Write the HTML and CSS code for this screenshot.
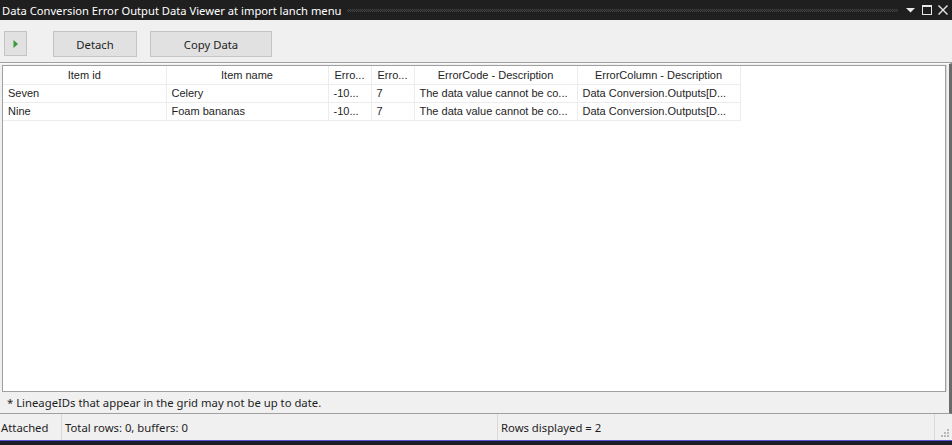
FILE: index.html
```html
<!DOCTYPE html>
<html>
<head>
<meta charset="utf-8">
<link rel="stylesheet" href="styles.css">
</head>
<body>
<div class="window">
  <div class="titlebar">
    <span class="title">Data Conversion Error Output Data Viewer at import lanch menu</span>
    <span class="grip"></span>
    <span class="tbtns">
      <svg class="ic" width="14" height="14" viewBox="0 0 14 14"><path d="M2 5 H11 L6.5 9.5 Z" fill="#e8e8e8"/></svg>
      <svg class="ic" width="14" height="14" viewBox="0 0 14 14"><rect x="2.5" y="2.5" width="9" height="9" fill="none" stroke="#e8e8e8" stroke-width="1"/><rect x="2" y="2" width="10" height="2" fill="#e8e8e8"/></svg>
      <svg class="ic" width="14" height="14" viewBox="0 0 14 14"><path d="M2.5 2.5 L11.5 11.5 M11.5 2.5 L2.5 11.5" stroke="#e8e8e8" stroke-width="1.4"/></svg>
    </span>
  </div>
  <div class="toolbar">
    <button class="btn play"><svg width="8" height="10" viewBox="0 0 8 10"><path d="M1.5 1 L6 5 L1.5 9 Z" fill="#3a9a3a"/></svg></button>
    <button class="btn detach">Detach</button>
    <button class="btn copy">Copy Data</button>
  </div>
  <div class="main">
    <div class="gridwrap">
      <table class="grid">
        <colgroup>
          <col style="width:163px"><col style="width:162px"><col style="width:43px"><col style="width:43px"><col style="width:163px"><col style="width:163px">
        </colgroup>
        <thead>
          <tr><th>Item id</th><th>Item name</th><th>Erro...</th><th>Erro...</th><th>ErrorCode - Description</th><th>ErrorColumn - Description</th></tr>
        </thead>
        <tbody>
          <tr><td>Seven</td><td>Celery</td><td>-10...</td><td>7</td><td>The data value cannot be co...</td><td>Data Conversion.Outputs[D...</td></tr>
          <tr><td>Nine</td><td>Foam bananas</td><td>-10...</td><td>7</td><td>The data value cannot be co...</td><td>Data Conversion.Outputs[D...</td></tr>
        </tbody>
      </table>
    </div>
    <div class="note">* LineageIDs that appear in the grid may not be up to date.</div>
  </div>
  <div class="status">
    <div class="sp s1">Attached</div>
    <div class="sp s2">Total rows: 0, buffers: 0</div>
    <div class="sp s3">Rows displayed = 2</div>
    <div class="sp s4"><svg width="12" height="12" viewBox="0 0 12 12"><g fill="#b8b8b8"><rect x="9" y="3" width="2" height="2"/><rect x="6" y="6" width="2" height="2"/><rect x="9" y="6" width="2" height="2"/><rect x="3" y="9" width="2" height="2"/><rect x="6" y="9" width="2" height="2"/><rect x="9" y="9" width="2" height="2"/></g></svg></div>
  </div>
  <div class="taskbar"></div>
</div>
</body>
</html>
```
FILE: styles.css
```css
* { box-sizing: border-box; }
html, body { margin: 0; padding: 0; }
body {
  width: 952px;
  height: 445px;
  overflow: hidden;
  font-family: "Noto Sans", "Open Sans", sans-serif;
  font-size: 11.3px;
  color: #1e1e1e;
  background: #f0f0f0;
}
.window {
  display: flex;
  flex-direction: column;
  height: 445px;
}
.titlebar {
  height: 20px;
  background: #1f1f1f;
  display: flex;
  align-items: center;
  padding-left: 2px;
  flex: none;
}
.title {
  color: #ffffff;
  font-size: 11.2px;
  white-space: nowrap;
}
.grip {
  flex: 1;
  height: 3px;
  margin: 0 6px 0 6px;
  background-image: conic-gradient(#464646 25%, transparent 0 50%, #464646 0 75%, transparent 0);
  background-size: 2px 2px;
}
.tbtns {
  display: flex;
  gap: 2px;
  padding-right: 2px;
}
.ic { display: block; }
.toolbar {
  height: 43px;
  flex: none;
  display: flex;
  align-items: flex-start;
  padding: 11px 0 0 4px;
  border-bottom: 1px solid #a0a0a0;
}
.btn {
  font-family: inherit;
  font-size: 11.3px;
  color: #1e1e1e;
  background: #e1e1e1;
  border: 1px solid #c4c4c4;
  height: 26px;
  padding: 0;
  display: flex;
  align-items: center;
  justify-content: center;
}
.play { width: 23px; height: 25px; }
.detach { width: 84px; margin-left: 26px; }
.copy { width: 122px; margin-left: 13px; }
.main {
  flex: 1;
  min-height: 0;
  display: flex;
  flex-direction: column;
  padding: 1px 3px 0 2px;
  border-top: 1px solid #fbfbfb;
  border-right: 3px solid #6a6a6a;
  border-bottom: 1px solid #a0a0a0;
}
.gridwrap {
  flex: 1;
  background: #ffffff;
  border: 1px solid #a0a0a0;
  box-shadow: 1px 0 0 #d8d8d8;
  overflow: hidden;
}
.grid {
  border-collapse: collapse;
  table-layout: fixed;
  width: 737px;
  font-family: "Liberation Sans", Arial, sans-serif;
  font-size: 11px;
}
.grid th, .grid td {
  height: 18px;
  padding: 0 0 0 5px;
  white-space: nowrap;
  overflow: hidden;
  font-weight: normal;
  border-right: 1px solid #ececec;
  border-bottom: 1px solid #ececec;
  color: #1e1e1e;
  text-align: left;
}
.grid th { text-align: center; padding: 0; }
.note {
  height: 21px;
  flex: none;
  padding: 3px 0 0 5px;
  white-space: nowrap;
}
.status {
  height: 26px;
  flex: none;
  display: flex;
  align-items: center;
}
.sp {
  height: 26px;
  display: flex;
  align-items: center;
  border-right: 1px solid #d9d9d9;
  white-space: nowrap;
}
.s1 { width: 62px; padding-left: 1px; }
.s2 { width: 436px; padding-left: 3px; }
.s3 { width: 437px; padding-left: 3px; }
.s4 { flex: 1; border-right: none; justify-content: flex-end; align-items: flex-end; padding: 0 2px 2px 0; }
.taskbar {
  height: 5px;
  flex: none;
  background: #1c1c28;
  border-top: 1px solid #5b52d6;
}
```
